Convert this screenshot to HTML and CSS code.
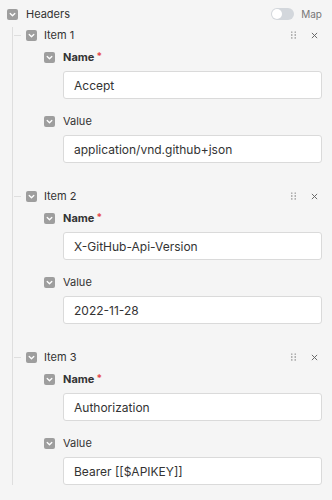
FILE: index.html
```html
<!doctype html>
<html>
<head>
    <meta charset='utf-8'>
    <title>Headers</title>
    <link rel="stylesheet" href="styles.css">
</head>
<body>
    <div class="group">
        <div class="row top">
            <span class="check"><svg viewBox="0 0 11 11"><path d="M3.2 4.5 5.5 6.8 7.8 4.5" /></svg></span>
            <span class="title">Headers</span>
            <span class="toggle"><span class="knob"></span></span>
            <span class="map">Map</span>
        </div>

        <div class="items">
            <div class="item">
                <div class="row">
                    <span class="check"><svg viewBox="0 0 11 11"><path d="M3.2 4.5 5.5 6.8 7.8 4.5" /></svg></span>
                    <span class="title">Item 1</span>
                    <span class="grip"><svg viewBox="0 0 6 9"><circle cx="1" cy="1" r=".8" /><circle cx="5" cy="1" r=".8" /><circle cx="1" cy="4.5" r=".8" /><circle cx="5" cy="4.5" r=".8" /><circle cx="1" cy="8" r=".8" /><circle cx="5" cy="8" r=".8" /></svg></span>
                    <span class="close"><svg viewBox="0 0 8 8"><path d="M1 1 7 7M7 1 1 7" /></svg></span>
                </div>
                <div class="field">
                    <div class="row">
                        <span class="check"><svg viewBox="0 0 11 11"><path d="M3.2 4.5 5.5 6.8 7.8 4.5" /></svg></span>
                        <span class="label">Name<span class="req">*</span></span>
                    </div>
                    <div class="input">Accept</div>
                </div>
                <div class="field">
                    <div class="row">
                        <span class="check"><svg viewBox="0 0 11 11"><path d="M3.2 4.5 5.5 6.8 7.8 4.5" /></svg></span>
                        <span class="title">Value</span>
                    </div>
                    <div class="input">application/vnd.github+json</div>
                </div>
            </div>

            <div class="item">
                <div class="row">
                    <span class="check"><svg viewBox="0 0 11 11"><path d="M3.2 4.5 5.5 6.8 7.8 4.5" /></svg></span>
                    <span class="title">Item 2</span>
                    <span class="grip"><svg viewBox="0 0 6 9"><circle cx="1" cy="1" r=".8" /><circle cx="5" cy="1" r=".8" /><circle cx="1" cy="4.5" r=".8" /><circle cx="5" cy="4.5" r=".8" /><circle cx="1" cy="8" r=".8" /><circle cx="5" cy="8" r=".8" /></svg></span>
                    <span class="close"><svg viewBox="0 0 8 8"><path d="M1 1 7 7M7 1 1 7" /></svg></span>
                </div>
                <div class="field">
                    <div class="row">
                        <span class="check"><svg viewBox="0 0 11 11"><path d="M3.2 4.5 5.5 6.8 7.8 4.5" /></svg></span>
                        <span class="label">Name<span class="req">*</span></span>
                    </div>
                    <div class="input">X-GitHub-Api-Version</div>
                </div>
                <div class="field">
                    <div class="row">
                        <span class="check"><svg viewBox="0 0 11 11"><path d="M3.2 4.5 5.5 6.8 7.8 4.5" /></svg></span>
                        <span class="title">Value</span>
                    </div>
                    <div class="input">2022-11-28</div>
                </div>
            </div>

            <div class="item">
                <div class="row">
                    <span class="check"><svg viewBox="0 0 11 11"><path d="M3.2 4.5 5.5 6.8 7.8 4.5" /></svg></span>
                    <span class="title">Item 3</span>
                    <span class="grip"><svg viewBox="0 0 6 9"><circle cx="1" cy="1" r=".8" /><circle cx="5" cy="1" r=".8" /><circle cx="1" cy="4.5" r=".8" /><circle cx="5" cy="4.5" r=".8" /><circle cx="1" cy="8" r=".8" /><circle cx="5" cy="8" r=".8" /></svg></span>
                    <span class="close"><svg viewBox="0 0 8 8"><path d="M1 1 7 7M7 1 1 7" /></svg></span>
                </div>
                <div class="field">
                    <div class="row">
                        <span class="check"><svg viewBox="0 0 11 11"><path d="M3.2 4.5 5.5 6.8 7.8 4.5" /></svg></span>
                        <span class="label">Name<span class="req">*</span></span>
                    </div>
                    <div class="input">Authorization</div>
                </div>
                <div class="field">
                    <div class="row">
                        <span class="check"><svg viewBox="0 0 11 11"><path d="M3.2 4.5 5.5 6.8 7.8 4.5" /></svg></span>
                        <span class="title">Value</span>
                    </div>
                    <div class="input">Bearer [[$APIKEY]]</div>
                </div>
            </div>
        </div>
    </div>
</body>
</html>
```

FILE: styles.css
```css
body {
    margin: 0;
    background: #f5f5f5;
    font-family: Inter, "Noto Sans", sans-serif;
    color: #333;
    height: 500px;
    overflow: hidden;
}

.group {
    padding: 6px 10px 0 7px;
}

.row {
    display: flex;
    align-items: center;
    height: 16px;
}

.check {
    width: 11px;
    height: 11px;
    flex: none;
    border-radius: 2px;
    background: #9e9e9e;
    display: flex;
}

.check svg {
    width: 11px;
    height: 11px;
    fill: none;
    stroke: #fff;
    stroke-width: 1.3;
    stroke-linecap: round;
    stroke-linejoin: round;
}

.title {
    margin-left: 8px;
    font-size: 11px;
}

.top .title {
    flex: 1;
}

.toggle {
    width: 23px;
    height: 12px;
    border-radius: 6px;
    background: #d3d7dc;
    display: flex;
    align-items: center;
    padding: 0 1px;
    box-sizing: border-box;
}

.knob {
    width: 10px;
    height: 10px;
    border-radius: 50%;
    background: #fff;
}

.map {
    margin-left: 7px;
    font-size: 10px;
    color: #777;
}

.items {
    margin: 5px 0 0 5px;
    border-left: 1px solid #dedede;
}

.item {
    margin-bottom: 25px;
}

.item > .row {
    padding-left: 13px;
    position: relative;
}

.item > .row::before {
    content: "";
    position: absolute;
    left: 1px;
    top: 8px;
    width: 7px;
    border-top: 1px solid #dedede;
}

.item > .row .title {
    flex: 1;
    margin-left: 7px;
}

.grip svg {
    display: block;
    width: 5px;
    height: 8px;
    fill: #666;
}

.close {
    margin: 0 4px 0 15px;
}

.close svg {
    display: block;
    width: 7px;
    height: 7px;
    stroke: #666;
    stroke-width: 1.1;
}

.field {
    margin: 6px 0 0 31px;
}

.field + .field {
    margin-top: 14px;
}

.label {
    margin-left: 8px;
    font-size: 11px;
    font-weight: 700;
}

.req {
    color: #e5484d;
    font-size: 10px;
    vertical-align: top;
    margin-left: 2px;
}

.input {
    margin: 6px 0 0 19px;
    height: 28px;
    box-sizing: border-box;
    border: 1px solid #dadada;
    border-radius: 3px;
    background: #fff;
    padding: 0 10px;
    display: flex;
    align-items: center;
    font-size: 12px;
    white-space: nowrap;
}
```
